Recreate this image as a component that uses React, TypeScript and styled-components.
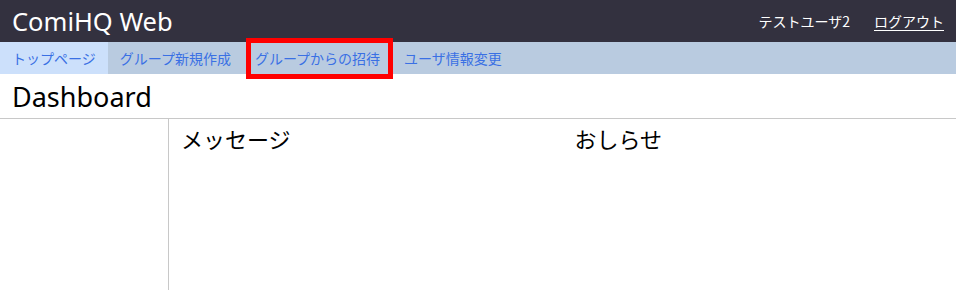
import React from "react";
import styled, { createGlobalStyle } from "styled-components";

const GlobalStyle = createGlobalStyle`
  html, body { margin: 0; padding: 0; background: #fff; }
  body { font-family: "Noto Sans", "Noto Sans CJK JP", sans-serif; }
  * { box-sizing: border-box; }
`;

const Page = styled.div`
  width: 956px;
  height: 290px;
  display: flex;
  flex-direction: column;
  overflow: hidden;
`;

const Header = styled.header`
  height: 42px;
  background: #33313f;
  display: flex;
  align-items: center;
  justify-content: space-between;
  padding: 0 12px;
  color: #fff;
`;

const Brand = styled.div`
  font-size: 25.5px;
  line-height: 42px;
  margin-top: -1px;
`;

const UserArea = styled.div`
  display: flex;
  align-items: center;
  gap: 24px;
  font-family: "Noto Sans CJK JP", sans-serif;
  font-size: 14px;
`;

const Logout = styled.a`
  color: #fff;
  text-decoration: underline;
  text-underline-offset: 3px;
`;

const Nav = styled.nav`
  height: 32px;
  background: #b9cbe0;
  display: flex;
`;

const NavItem = styled.a<{ $active?: boolean; $marked?: boolean }>`
  position: relative;
  display: flex;
  align-items: center;
  padding: 0 12px;
  font-family: "Noto Sans CJK JP", sans-serif;
  font-size: 14px;
  color: #3a70e4;
  background: ${(p) => (p.$active ? "#cce0fb" : "transparent")};
  ${(p) =>
    p.$marked
      ? `
    &::after {
      content: "";
      position: absolute;
      left: 3px;
      right: -1px;
      top: -4px;
      bottom: -5px;
      border: 5px solid #ff0000;
    }
  `
      : ""}
`;

const TitleBar = styled.div`
  height: 45px;
  border-bottom: 1px solid #c8c8c8;
  padding: 0 12px;
  display: flex;
  align-items: center;
`;

const Title = styled.h1`
  margin: 0;
  font-weight: 400;
  font-size: 27px;
  color: #000;
`;

const Main = styled.div`
  flex: 1;
  display: flex;
`;

const Sidebar = styled.aside`
  width: 169px;
  border-right: 1px solid #c8c8c8;
`;

const Content = styled.div`
  flex: 1;
  display: grid;
  grid-template-columns: 1fr 1fr;
`;

const Column = styled.section`
  padding: 3px 12px;
`;

const ColumnTitle = styled.h2`
  margin: 0;
  font-weight: 400;
  font-size: 22px;
  font-family: "Noto Sans CJK JP", sans-serif;
  color: #000;
`;

export default function App() {
  return (
    <>
      <GlobalStyle />
      <Page>
        <Header>
          <Brand>ComiHQ Web</Brand>
          <UserArea>
            <span>テストユーザ2</span>
            <Logout>ログアウト</Logout>
          </UserArea>
        </Header>
        <Nav>
          <NavItem $active>トップページ</NavItem>
          <NavItem>グループ新規作成</NavItem>
          <NavItem $marked>グループからの招待</NavItem>
          <NavItem>ユーザ情報変更</NavItem>
        </Nav>
        <TitleBar>
          <Title>Dashboard</Title>
        </TitleBar>
        <Main>
          <Sidebar />
          <Content>
            <Column>
              <ColumnTitle>メッセージ</ColumnTitle>
            </Column>
            <Column>
              <ColumnTitle>おしらせ</ColumnTitle>
            </Column>
          </Content>
        </Main>
      </Page>
    </>
  );
}
